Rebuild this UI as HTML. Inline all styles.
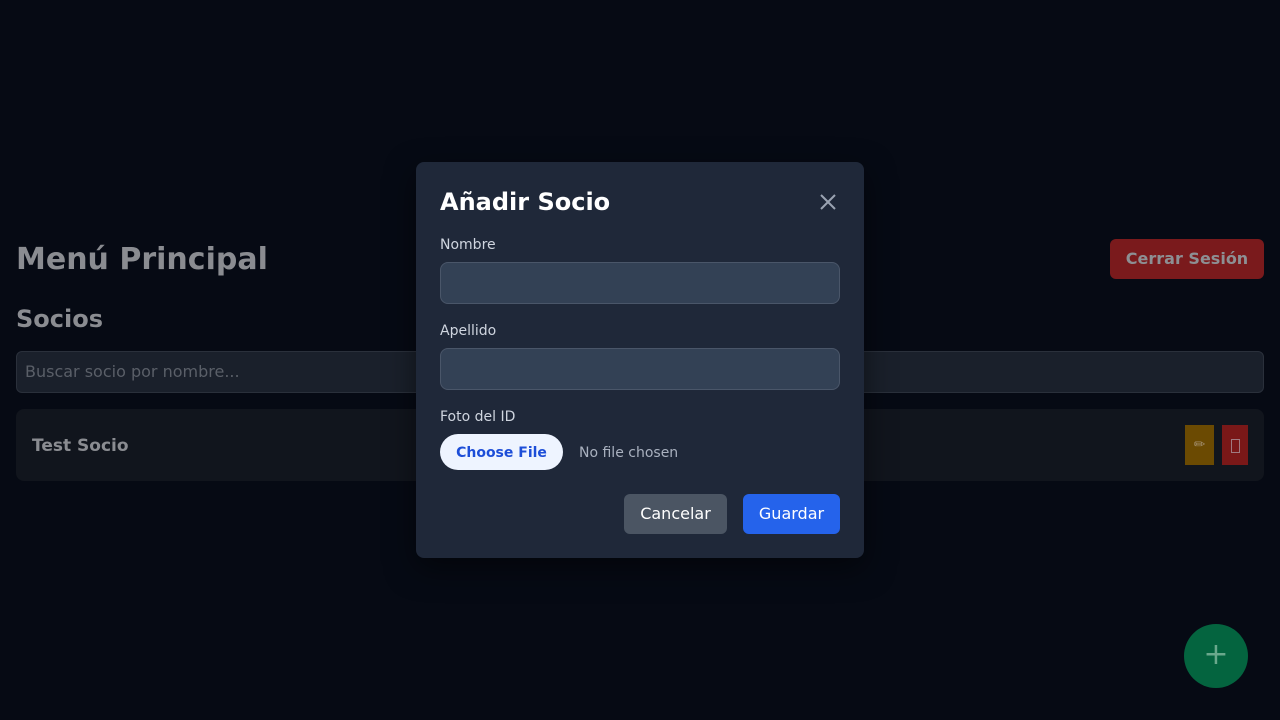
<!DOCTYPE html>
<html><head><meta charset="utf-8"><style>
*{box-sizing:border-box;margin:0;padding:0}
body{width:1280px;height:720px;background:#060a14;font-family:"DejaVu Sans","Liberation Sans",sans-serif;position:relative;overflow:hidden}
.a{position:absolute}
</style></head><body>
<div class="a" style="left:16px;top:242px;font-size:30px;font-weight:bold;color:#8a8c91">Menú Principal</div>
<div class="a" style="left:1110px;top:239px;width:154px;height:40px;background:#7a1a1c;border-radius:6px;color:#8d8f93;font-weight:bold;font-size:16px;text-align:center;line-height:40px">Cerrar Sesión</div>
<div class="a" style="left:16px;top:305px;font-size:24px;font-weight:bold;color:#8a8c91">Socios</div>
<div class="a" style="left:16px;top:351px;width:1248px;height:42px;background:#1a202b;border:1px solid #2a303b;border-radius:6px;color:#5a5f68;font-size:16px;padding-left:8px;line-height:40px">Buscar socio por nombre...</div>
<div class="a" style="left:16px;top:409px;width:1248px;height:72px;background:#11151d;border-radius:8px"></div>
<div class="a" style="left:32px;top:436px;font-size:17px;font-weight:bold;color:#8a8c91">Test Socio</div>
<div class="a" style="left:1185px;top:425px;width:29px;height:40px;background:#6b4a02;color:#a08c6a;text-align:center;line-height:40px;font-size:14px">✏</div>
<div class="a" style="left:1222px;top:425px;width:26px;height:40px;background:#7a1818"><div style="margin:14px auto;width:9px;height:14px;border:1px solid #a07a80"></div></div>
<div class="a" style="left:1184px;top:624px;width:64px;height:64px;border-radius:50%;background:#04643f;color:#6aa88c;font-size:30px;text-align:center;line-height:62px">+</div>

<div class="a" style="left:416px;top:162px;width:448px;height:396px;background:#1f2839;border-radius:8px;box-shadow:0 10px 30px rgba(0,0,0,.5)">
<div class="a" style="left:24px;top:26px;font-size:24px;font-weight:bold;color:#fff">Añadir Socio</div>
<svg class="a" style="left:403px;top:31px" width="18" height="18" viewBox="0 0 18 18"><path d="M2 2L16 16M16 2L2 16" stroke="#9aa3b2" stroke-width="2"/></svg>
<div class="a" style="left:24px;top:75px;font-size:14px;color:#cfd5df">Nombre</div>
<div class="a" style="left:24px;top:100px;width:400px;height:42px;background:#334155;border:1px solid #4a5669;border-radius:8px"></div>
<div class="a" style="left:24px;top:161px;font-size:14px;color:#cfd5df">Apellido</div>
<div class="a" style="left:24px;top:186px;width:400px;height:42px;background:#334155;border:1px solid #4a5669;border-radius:8px"></div>
<div class="a" style="left:24px;top:247px;font-size:14px;color:#cfd5df">Foto del ID</div>
<div class="a" style="left:24px;top:272px;width:123px;height:36px;background:#eef4ff;border-radius:18px;color:#1d4ed8;font-weight:bold;font-size:14px;text-align:center;line-height:38px">Choose File</div>
<div class="a" style="left:163px;top:283px;font-size:14px;color:#a9b1bf">No file chosen</div>
<div class="a" style="left:208px;top:332px;width:103px;height:40px;background:#4b5563;border-radius:6px;color:#fff;font-size:16px;text-align:center;line-height:40px">Cancelar</div>
<div class="a" style="left:327px;top:332px;width:97px;height:40px;background:#2563eb;border-radius:6px;color:#fff;font-size:16px;text-align:center;line-height:40px">Guardar</div>
</div>
</body></html>
